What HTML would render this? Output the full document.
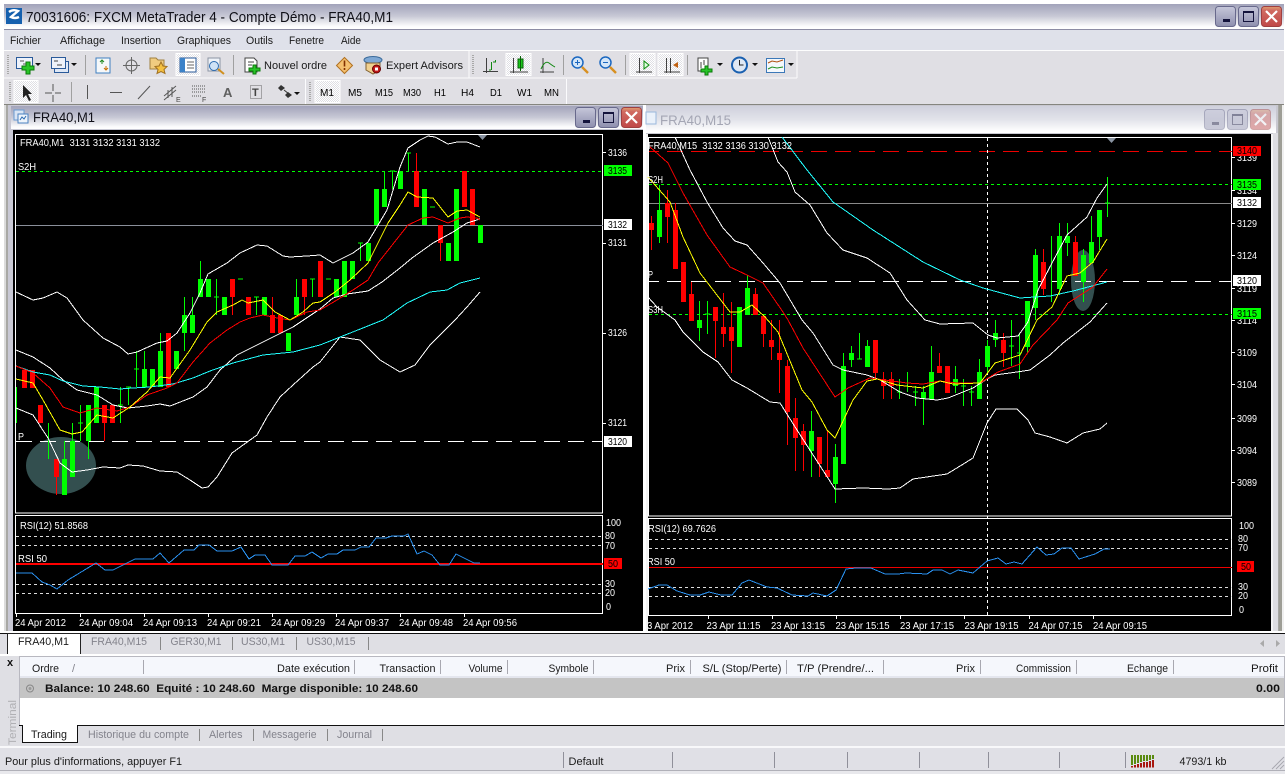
<!DOCTYPE html>
<html><head><meta charset="utf-8"><title>MetaTrader</title>
<style>
html,body{margin:0;padding:0;background:#fff}
svg{display:block}
text{font-family:"Liberation Sans",sans-serif;font-size:11px;fill:#1a1a1a;white-space:pre}
.c text,text.c{fill:#fff;font-size:10px}
.k{font-size:10px!important;fill:#000!important}
.g{fill:#83838c}
.b{font-weight:bold;fill:#111}
.l{fill:none;shape-rendering:crispEdges}
.e{shape-rendering:crispEdges}
</style></head><body>
<svg width="1288" height="774" viewBox="0 0 1288 774" xmlns="http://www.w3.org/2000/svg">
<defs>
<linearGradient id="tb" x1="0" y1="0" x2="0" y2="1"><stop offset="0" stop-color="#a2a3ba"/><stop offset=".5" stop-color="#c8c9d6"/><stop offset=".9" stop-color="#fbfbfc"/><stop offset="1" stop-color="#fff"/></linearGradient>
<linearGradient id="tbi" x1="0" y1="0" x2="0" y2="1"><stop offset="0" stop-color="#cfd0dc"/><stop offset=".5" stop-color="#e2e3ea"/><stop offset=".9" stop-color="#fcfcfd"/><stop offset="1" stop-color="#fff"/></linearGradient>
<linearGradient id="bb" x1="0" y1="0" x2="0" y2="1"><stop offset="0" stop-color="#c6c7da"/><stop offset="1" stop-color="#8e8fae"/></linearGradient>
<linearGradient id="br" x1="0" y1="0" x2="0" y2="1"><stop offset="0" stop-color="#e0a070"/><stop offset=".2" stop-color="#d06a62"/><stop offset="1" stop-color="#c04848"/></linearGradient>
<pattern id="dith" width="2" height="2" patternUnits="userSpaceOnUse"><rect width="2" height="2" fill="#fff"/><rect width="1" height="1" fill="#dfdfe4"/><rect x="1" y="1" width="1" height="1" fill="#dfdfe4"/></pattern>
<g id="btns">
<rect x=".5" y=".5" width="20" height="20" rx="3" fill="url(#bb)" stroke="#68698c"/>
<rect x="8" y="13" width="7" height="3" fill="#14143c"/>
<rect x="23.5" y=".5" width="20" height="20" rx="3" fill="url(#bb)" stroke="#68698c"/>
<rect x="28.5" y="5.5" width="10" height="10" fill="none" stroke="#14143c"/><rect x="28" y="5" width="11" height="2" fill="#14143c"/>
<rect x="46.5" y=".5" width="20" height="20" rx="3" fill="url(#br)" stroke="#a04040"/>
<path d="M51 5l11 11M62 5l-11 11" stroke="#fff" stroke-width="2.2" fill="none"/>
</g>
<g id="arr"><path d="M0 0h6l-3 3z" fill="#111"/></g>
</defs>

<rect width="1288" height="774" fill="#fff"/>

<!-- main title -->
<rect x="4" y="4" width="1280" height="24.5" fill="url(#tb)"/>
<rect x="4" y="29" width="1280" height="1" fill="#8c8ca4"/>
<rect x="6" y="8" width="16" height="16" fill="#1560ae"/>
<path d="M9 12q4-3 9-1l-7 6q4 2 8 0" fill="none" stroke="#fff" stroke-width="2.4"/>
<text x="26" y="22" textLength="367" lengthAdjust="spacingAndGlyphs" style="font-size:15px;fill:#101018">70031606: FXCM MetaTrader 4 - Compte Démo - FRA40,M1</text>
<use href="#btns" x="1215" y="6"/>

<!-- menu -->
<rect x="4" y="30" width="1280" height="20" fill="#dfe1ea"/>
<rect x="4" y="50" width="1280" height="1" fill="#fdfdfd"/>
<text x="10" y="44" textLength="31" lengthAdjust="spacingAndGlyphs">Fichier</text>
<text x="60" y="44" textLength="45" lengthAdjust="spacingAndGlyphs">Affichage</text>
<text x="121" y="44" textLength="40" lengthAdjust="spacingAndGlyphs">Insertion</text>
<text x="177" y="44" textLength="54" lengthAdjust="spacingAndGlyphs">Graphiques</text>
<text x="246" y="44" textLength="27" lengthAdjust="spacingAndGlyphs">Outils</text>
<text x="289" y="44" textLength="35" lengthAdjust="spacingAndGlyphs">Fenetre</text>
<text x="341" y="44" textLength="20" lengthAdjust="spacingAndGlyphs">Aide</text>

<!-- toolbars -->
<rect x="4" y="51" width="1280" height="53" fill="#e0dfe4"/>
<path d="M4 78h793M797 51v27M469 51v27" stroke="#fbfbfd" fill="none" class="e"/>
<path d="M305.500 79v25M566.500 79v25" stroke="#fbfbfd" fill="none" class="e"/>
<path d="M4 104.500h1280" stroke="#85857f" fill="none" class="e"/>
<!-- grips -->
<path d="M8 55v20M473 55v20M10 82v20M310 82v20" stroke="#a8a8a8" stroke-width="2" stroke-dasharray="1 1" fill="none" class="e"/>
<!-- separators -->
<path d="M85.500 55v20M233.500 55v20M563.500 55v20M625.500 55v20M687.500 55v20M71.500 82v20" stroke="#a0a0a0" fill="none" class="e"/>
<!-- pressed -->
<g fill="url(#dith)" stroke="#fff" class="e">
<rect x="176" y="53.500" width="24" height="22"/><rect x="506" y="53.500" width="25" height="22"/>
<rect x="630" y="53.500" width="25" height="22"/><rect x="658" y="53.500" width="25" height="22"/>
<rect x="14" y="80.500" width="24" height="22"/><rect x="315" y="80.500" width="25" height="22"/>
</g>
<!-- new chart -->
<g>
<rect x="16.500" y="57.500" width="16" height="11" fill="#eef2fa" stroke="#2a5a9a"/>
<path d="M20 61h4M23 64h5" stroke="#555" fill="none"/>
<path d="M26 62h4v4h4v4h-4v4h-4v-4h-4v-4h4z" fill="#28c428" stroke="#0a7a0a"/>
<use href="#arr" x="35" y="63"/>
</g>
<g>
<rect x="54.500" y="61.500" width="14" height="11" fill="#dfe8f6" stroke="#2a5a9a"/>
<rect x="51.500" y="57.500" width="14" height="11" fill="#eef2fa" stroke="#2a5a9a"/>
<path d="M54 61h4M57 65h5" stroke="#444" fill="none"/>
<use href="#arr" x="71" y="63"/>
</g>
<!-- market watch -->
<rect x="96" y="58" width="14" height="15" fill="#f6f8fa" stroke="#3f7fc0"/>
<path d="M100 62l2-2 2 2M102 60v4" stroke="#208a20" fill="none"/><path d="M104 68l2 2 2-2M106 70v-4" stroke="#c87000" fill="none"/>
<!-- crosshair -->
<circle cx="131.500" cy="65.500" r="5.500" fill="none" stroke="#666"/><path d="M131.500 57v17M123 65.500h17" stroke="#666" fill="none"/>
<!-- folder star -->
<path d="M150 58h6l2 2h6v9h-14z" fill="#f0cc80" stroke="#a08040"/>
<path d="M161 62l2 4 4 .500-3 3 1 4-4-2-4 2 1-4-3-3 4-.500z" fill="#f4c040" stroke="#a07020"/>
<!-- navigator -->
<rect x="180" y="58" width="16" height="14" fill="#fff" stroke="#2a5a9a"/><rect x="180" y="58" width="5" height="14" fill="#3c82c8"/>
<path d="M187 62h7M187 65h7M187 68h7" stroke="#666" fill="none"/>
<!-- tester -->
<rect x="208" y="58" width="12" height="13" fill="#eef2f8" stroke="#8c94a4"/>
<circle cx="214" cy="66" r="4.500" fill="#cfe2f6" stroke="#2a6ab0"/><path d="M218 69l6 5" stroke="#d09020" stroke-width="2" fill="none"/>
<!-- new order -->
<path d="M245 58h9l3 3v11h-12z" fill="#fff" stroke="#444"/><path d="M248 62h6M248 65h4" stroke="#444" fill="none"/>
<path d="M253 65h3v3h4v3h-4v3h-3v-3h-4v-3h4z" fill="#28c428" stroke="#0a7a0a"/>
<text x="264" y="69" textLength="63" lengthAdjust="spacingAndGlyphs">Nouvel ordre</text>
<!-- alert -->
<path d="M344.500 57.500l8 8-8 8-8-8z" fill="#f4c070" stroke="#b07020"/><path d="M344.500 60.500v6M344.500 68v2" stroke="#803000" stroke-width="1.600" fill="none"/>
<!-- expert -->
<ellipse cx="373" cy="60" rx="9" ry="3.500" fill="#7fa8d4" stroke="#3a6a9a"/><path d="M366 63h14v7l-7 4-7-4z" fill="#f0d090" stroke="#806030"/>
<circle cx="376.500" cy="69" r="4" fill="#c01818" stroke="#600"/><rect x="375" y="67.500" width="3" height="3" fill="#fff"/>
<text x="386" y="69" textLength="77" lengthAdjust="spacingAndGlyphs">Expert Advisors</text>
<!-- chart type icons -->
<path d="M486.500 58v15M483 71.500h15" stroke="#404040" fill="none"/><path d="M491.500 62v8M493 62h3M489 70h2M495.500 60v2" stroke="#128812" fill="none"/>
<path d="M513.500 58v15M510 72h18" stroke="#404040" fill="none"/><rect x="518" y="59" width="5" height="9" fill="#1cc81c" stroke="#086008"/><path d="M520.500 56v15" stroke="#086008" fill="none"/>
<path d="M543 58v15M540 72h14" stroke="#404040" fill="none"/><path d="M541 69q4-9 8-6t6 4" stroke="#128812" fill="none"/>
<!-- zoom -->
<circle cx="577.500" cy="62.500" r="5.500" fill="#d4e6f8" stroke="#1c68c0" stroke-width="1.500"/><path d="M575 62.500h5M577.500 60v5" stroke="#1c68c0" fill="none"/><path d="M582 67l6 6" stroke="#d89020" stroke-width="2.400" fill="none"/>
<circle cx="605.500" cy="62.500" r="5.500" fill="#d4e6f8" stroke="#1c68c0" stroke-width="1.500"/><path d="M603 62.500h5" stroke="#1c68c0" fill="none"/><path d="M610 67l6 6" stroke="#d89020" stroke-width="2.400" fill="none"/>
<!-- shift -->
<path d="M639.500 58v15M636 72h16" stroke="#404040" fill="none"/><path d="M644 61l5 4-5 4z" fill="#dfffdf" stroke="#0a8a0a"/>
<path d="M666.500 58v15M670.500 58v15M664 72h16" stroke="#404040" fill="none"/><path d="M678 62l-5 3 5 3z" fill="#c06010"/>
<!-- new doc -->
<path d="M698 58h10v13h-10z" fill="#fff" stroke="#444"/><path d="M701 62v6M704 60v5" stroke="#444" fill="none"/>
<path d="M705 66h3v3h4v3h-4v3h-3v-3h-4v-3h4z" fill="#28c428" stroke="#0a7a0a"/><use href="#arr" x="717" y="63"/>
<!-- clock -->
<circle cx="739.500" cy="65" r="7.500" fill="#dfe8f4" stroke="#1a60b0" stroke-width="2"/><path d="M739.500 60v5h4" stroke="#222" fill="none"/><use href="#arr" x="752" y="63"/>
<!-- indicators -->
<rect x="766.500" y="58.500" width="18" height="14" fill="#f4f8fc" stroke="#3c78b8"/><path d="M768 63l4-2 5 1 6-2" stroke="#b05010" fill="none"/><path d="M768 69l4-2 5 1 6-1" stroke="#209020" fill="none"/><use href="#arr" x="788" y="63"/>

<!-- toolbar 2 -->
<path d="M23 85v13l3-3 3 6 2-1-3-6h4z" fill="#222"/>
<path d="M53 84v7M53 95v7M45 93h7M55 93h6" stroke="#555" fill="none"/>
<path d="M87.500 85v14M110 92.500h12M138 99l12-13" stroke="#555" fill="none"/>
<path d="M164 96l12-10M164 100l12-10M168 90v8M172 87v10" stroke="#555" fill="none"/><text x="176" y="102" style="font-size:7px;fill:#444">E</text>
<path d="M192 86h14M192 89h14M192 92h14M192 96h9" stroke="#555" stroke-dasharray="1 1" fill="none"/><text x="202" y="102" style="font-size:7px;fill:#444">F</text>
<text x="223" y="97" style="font-size:13px;font-weight:bold;fill:#606060">A</text>
<rect x="250.500" y="85.500" width="11" height="13" fill="none" stroke="#666" stroke-dasharray="1 1"/><text x="252" y="96" style="font-size:11px;font-weight:bold;fill:#444">T</text>
<path d="M281 85l4 3-4 3-3-3zM288 92l4 3-4 3-3-3z" fill="#333"/><path d="M284 90l5 4" stroke="#333" fill="none"/><use href="#arr" x="294" y="92"/>
<text class="k" x="320" y="96" textLength="14" lengthAdjust="spacingAndGlyphs">M1</text>
<text class="k" x="348" y="96" textLength="14" lengthAdjust="spacingAndGlyphs">M5</text>
<text class="k" x="375" y="96" textLength="18" lengthAdjust="spacingAndGlyphs">M15</text>
<text class="k" x="403" y="96" textLength="18" lengthAdjust="spacingAndGlyphs">M30</text>
<text class="k" x="434" y="96" textLength="12" lengthAdjust="spacingAndGlyphs">H1</text>
<text class="k" x="461" y="96" textLength="13" lengthAdjust="spacingAndGlyphs">H4</text>
<text class="k" x="490" y="96" textLength="12" lengthAdjust="spacingAndGlyphs">D1</text>
<text class="k" x="517" y="96" textLength="15" lengthAdjust="spacingAndGlyphs">W1</text>
<text class="k" x="544" y="96" textLength="15" lengthAdjust="spacingAndGlyphs">MN</text>

<!-- MDI background -->
<rect x="4" y="105" width="1280" height="527" fill="#a8a8a4"/>
<rect x="4" y="105" width="2" height="527" fill="#dcdcdc"/>
<rect x="1279" y="105" width="3" height="527" fill="#9e9e96"/>
<rect x="1282" y="105" width="2" height="527" fill="#f0f0f0"/>

<!-- LEFT WINDOW -->
<rect x="8" y="105" width="637" height="527" fill="#c8c8d4"/>
<rect x="11" y="106" width="634" height="23" fill="url(#tb)"/>
<rect x="643" y="105" width="3" height="527" fill="#fff"/>
<rect x="14" y="110" width="10" height="10" fill="#d8e4f4" stroke="#6a9ad0"/><rect x="18" y="114" width="10" height="9" fill="#eef4fb" stroke="#4a82c0"/><path d="M20 120l2-3 2 2 2-3" stroke="#2a6ab0" fill="none"/>
<text x="33" y="122" textLength="62" lengthAdjust="spacingAndGlyphs" style="font-size:14px;fill:#101018">FRA40,M1</text>
<use href="#btns" x="575" y="107"/>
<rect x="13" y="130" width="630" height="501" fill="#000"/>

<!-- RIGHT WINDOW -->
<rect x="646" y="105" width="632" height="527" fill="#c8c8d0"/>
<rect x="646" y="106" width="630" height="27" fill="url(#tbi)"/>
<rect x="1271" y="134" width="2" height="498" fill="#f4f4f4"/>
<rect x="1273" y="133" width="5" height="499" fill="#dedee2"/>
<rect x="646" y="134" width="2" height="498" fill="#f4f4f4"/>
<rect x="646" y="112" width="10" height="12" fill="#eaf1fa" stroke="#9ab8dc"/>
<text x="660" y="125" textLength="71" lengthAdjust="spacingAndGlyphs" style="font-size:14px;fill:#a4a6b4">FRA40,M15</text>
<use href="#btns" x="1204" y="109" opacity=".45"/>
<rect x="648" y="134" width="623" height="497" fill="#000"/>

<!-- LEFT CHART -->
<ellipse cx="61" cy="465.500" rx="35" ry="28.500" fill="#334f4f"/>
<rect x="15.500" y="134.500" width="587" height="378.500" fill="none" stroke="#fff" class="e"/>
<rect x="15.500" y="515.500" width="587" height="98" fill="none" stroke="#fff" class="e"/>
<path d="M16 171.500h587" stroke="#0f0" stroke-dasharray="3 3" class="l"/>
<path d="M16 225.500h587" stroke="#8a8f9a" class="l"/>
<path d="M16 441.500h587" stroke="#fff" stroke-dasharray="16 8" class="l"/>
<path d="M478 135h9l-4.500 5z" fill="#8a94a2"/>
<path class="l" stroke="#0f0" d="M16.500 387V423M48.500 423V459M64.500 441V459M72.500 423V441M80.500 405V441M78 423h5M88.500 441V459M120.500 387V423M118 405h5M128.500 387V405M126 387h5M136.500 351V387M134 369h5M144.500 351V369M160.500 333V351M184.500 297V351M192.500 297V315M200.500 261V279M216.500 279V315M214 297h5M238 279h5M256.500 297V315M254 297h5M296.500 279V297M312.500 279V297M310 279h5M326 279h5M360.500 243V261M358 243h5M384.500 171V189M392.500 171V189M390 171h5M408.500 153V171M406 153h5M430 207h5"/>
<path class="l" stroke="#0f0" stroke-width="5" d="M64.500 459V495M72.500 441V477M88.500 405V441M96.500 387V423M144.500 369V387M152.500 369V387M160.500 351V387M176.500 351V369M184.500 315V333M192.500 315V333M200.500 279V297M208.500 279V297M224.500 297V315M264.500 297V315M288.500 333V351M296.500 297V315M336.500 279V297M344.500 261V297M352.500 261V279M368.500 243V261M376.500 189V225M384.500 189V207M400.500 171V189M424.500 189V225M448.500 243V261M456.500 189V261M480.500 225V243"/>
<path class="l" stroke="#f00" d="M56.500 477V495M104.500 423V441M232.500 297V315M272.500 297V315M304.500 297V315M416.500 153V171M440.500 243V261"/>
<path class="l" stroke="#f00" stroke-width="5" d="M24.500 370V388M32.500 370V388M40.500 405V423M56.500 459V477M104.500 405V423M112.500 405V423M168.500 333V387M232.500 279V297M248.500 297V315M272.500 315V333M280.500 315V333M304.500 279V297M320.500 261V297M416.500 171V207M440.500 225V243M464.500 171V207M472.500 189V225"/>
<polyline class="l" stroke="#fff" points="16,292 33,300 43,298 57,292 67,298 83,320 103,338 120,347 128,354 137,352 157,343 167,341 177,333 190,313 200,293 208,274 227,263 240,253 257,245 267,246 283,256 290,257 307,256 320,255 333,263 353,253 368,242 387,210 400,167 408,148 420,140 428,136 435,137 448,144 457,142 467,142 480,147"/>
<polyline class="l" stroke="#fff" points="16,350 33,357 50,368 63,380 77,390 97,395 113,405 128,408 147,406 160,404 170,406 193,397 207,387 220,370 237,355 253,347 273,337 293,327 320,309 333,298 347,294 368,291 382,282 400,268 412,258 433,243 453,232 467,223 480,219"/>
<polyline class="l" stroke="#fff" points="16,408 33,415 48,438 60,463 72,472 87,470 103,467 120,468 128,465 143,466 160,471 177,472 190,480 202,488 208,487 217,477 232,453 257,435 267,417 280,397 293,385 313,367 320,362 340,337 360,340 380,360 400,372 415,365 430,345 455,320 467,307 480,292"/>
<polyline class="l" stroke="#2ff" points="16,366 33,372 50,375 63,381 83,386 100,387 120,389 133,388 150,387 173,384 193,378 210,371 233,363 263,355 293,352 320,345 383,320 407,303 430,292 447,290 460,283 480,278"/>
<polyline class="l" stroke="#f00" points="16,366 33,373 50,388 63,407 80,413 97,408 117,411 130,407 147,395 167,388 177,383 193,362 210,343 227,330 240,322 250,318 263,315 277,318 290,320 307,312 320,310 337,300 353,290 368,280 378,263 408,225 423,218 433,217 448,223 460,218 467,217 477,218 480,220"/>
<polyline class="l" stroke="#ff0" points="16,379 33,383 43,400 60,430 72,434 82,432 97,415 113,418 130,407 147,392 160,377 170,378 190,350 207,322 217,312 233,305 242,300 248,303 263,300 275,312 290,320 303,312 313,303 320,302 335,292 350,280 368,263 388,223 400,205 408,192 417,197 433,198 448,217 457,211 467,210 480,217"/>
<!-- left labels -->
<g class="c">
<text x="20" y="146" textLength="140" lengthAdjust="spacingAndGlyphs">FRA40,M1  3131 3132 3131 3132</text>
<text x="18" y="170" textLength="18" lengthAdjust="spacingAndGlyphs">S2H</text>
<text x="18" y="440" textLength="6" lengthAdjust="spacingAndGlyphs">P</text>
<text x="20" y="529" textLength="68" lengthAdjust="spacingAndGlyphs">RSI(12) 51.8568</text>
<text x="18" y="562" textLength="29" lengthAdjust="spacingAndGlyphs">RSI 50</text>
<text x="608" y="156" textLength="19" lengthAdjust="spacingAndGlyphs">3136</text>
<text x="608" y="246" textLength="19" lengthAdjust="spacingAndGlyphs">3131</text>
<text x="608" y="336" textLength="19" lengthAdjust="spacingAndGlyphs">3126</text>
<text x="608" y="426" textLength="19" lengthAdjust="spacingAndGlyphs">3121</text>
<text x="606" y="526" textLength="15" lengthAdjust="spacingAndGlyphs">100</text>
<text x="605" y="539" textLength="10" lengthAdjust="spacingAndGlyphs">80</text>
<text x="605" y="549" textLength="10" lengthAdjust="spacingAndGlyphs">70</text>
<text x="605" y="587" textLength="10" lengthAdjust="spacingAndGlyphs">30</text>
<text x="605" y="596" textLength="10" lengthAdjust="spacingAndGlyphs">20</text>
<text x="606" y="610" textLength="5" lengthAdjust="spacingAndGlyphs">0</text>
<text x="15" y="626" textLength="51" lengthAdjust="spacingAndGlyphs">24 Apr 2012</text>
<text x="79" y="626" textLength="54" lengthAdjust="spacingAndGlyphs">24 Apr 09:04</text>
<text x="143" y="626" textLength="54" lengthAdjust="spacingAndGlyphs">24 Apr 09:13</text>
<text x="207" y="626" textLength="54" lengthAdjust="spacingAndGlyphs">24 Apr 09:21</text>
<text x="271" y="626" textLength="54" lengthAdjust="spacingAndGlyphs">24 Apr 09:29</text>
<text x="335" y="626" textLength="54" lengthAdjust="spacingAndGlyphs">24 Apr 09:37</text>
<text x="399" y="626" textLength="54" lengthAdjust="spacingAndGlyphs">24 Apr 09:48</text>
<text x="463" y="626" textLength="54" lengthAdjust="spacingAndGlyphs">24 Apr 09:56</text>
</g>
<path class="l" stroke="#fff" d="M603 152.500h3M603 243.500h3M603 333.500h3M603 423.500h3M16.500 614v3M80.500 614v3M144.500 614v3M208.500 614v3M272.500 614v3M336.500 614v3M400.500 614v3M464.500 614v3"/>
<rect x="604" y="165" width="28" height="11" fill="#0f0"/><text class="k" x="608" y="174" textLength="19" lengthAdjust="spacingAndGlyphs">3135</text>
<rect x="604" y="219" width="28" height="11" fill="#fff"/><text class="k" x="608" y="228" textLength="19" lengthAdjust="spacingAndGlyphs">3132</text>
<rect x="604" y="436" width="28" height="11" fill="#fff"/><text class="k" x="608" y="445" textLength="19" lengthAdjust="spacingAndGlyphs">3120</text>
<!-- left RSI -->
<path d="M16 536.500h587M16 545.500h587M16 584.500h587M16 593.500h587" stroke="#ddd" stroke-dasharray="3 3" class="l"/>
<path d="M16 564h587" stroke="#f00" stroke-width="2" class="l"/>
<polyline class="l" stroke="#2a90ee" points="16,573 32,573 42,582 50,585 57,589 68,580 96,563 105,570 113,570 135,559 153,559 160,553 169,563 184,550 194,550 199,545 209,545 217,551 232,551 241,547 249,559 255,555 265,555 272,565 288,565 295,556 305,556 312,552 321,558 328,554 337,554 343,550 355,550 361,547 369,547 376,538 386,538 392,536 404,536 408,534 417,554 424,551 432,555 440,565 449,565 456,554 474,563 480,563"/>
<rect x="604" y="558" width="18" height="11" fill="#f00"/><text class="k" x="608" y="567" textLength="10" lengthAdjust="spacingAndGlyphs">50</text>

<!-- RIGHT CHART -->
<ellipse cx="1083" cy="280.500" rx="12" ry="30.500" fill="#334f4f"/>
<rect x="648.500" y="137.500" width="583" height="378.500" fill="none" stroke="#fff" class="e"/>
<rect x="648.500" y="518.500" width="583" height="97" fill="none" stroke="#fff" class="e"/>
<path d="M649 151.500h583" stroke="#e00" stroke-dasharray="16 8" stroke-dashoffset="6" class="l"/>
<path d="M649 184.500h583" stroke="#0f0" stroke-dasharray="3 3" class="l"/>
<path d="M649 203.500h583" stroke="#8a8a8a" class="l"/>
<path d="M649 281.500h583" stroke="#fff" stroke-dasharray="16 8" stroke-dashoffset="6" class="l"/>
<path d="M649 314.500h583" stroke="#0f0" stroke-dasharray="3 3" class="l"/>
<path d="M987.500 138V615" stroke="#fff" stroke-dasharray="3 3" class="l"/>
<path d="M1107 138h9l-4.500 5z" fill="#8a94a2"/>
<path class="l" stroke="#0f0" d="M659.500 185V243M699.500 301V341M707.500 301V334M705 314h5M747.500 275V288M811.500 411V477M835.500 444V503M843.500 353V366M851.500 346V367M859.500 333V359M857 359h5M867.500 340V346M899.500 379V399M897 392h5M907.500 372V392M915.500 386V406M913 392h5M923.500 386V425M931.500 346V372M955.500 366V393M963.500 379V406M961 386h5M971.500 386V406M969 392h5M979.500 359V372M987.500 340V373M995.500 320V347M1011.500 320V366M1009 346h5M1019.500 333V379M1017 353h5M1027.500 347V353M1035.500 249V320M1051.500 236V302M1059.500 223V295M1067.500 223V256M1083.500 249V302M1091.500 216V242M1099.500 237V250M1107.500 177V217M1105 203h5"/>
<path class="l" stroke="#0f0" stroke-width="5" d="M659.500 210V237M699.500 320V328M739.500 307V347M747.500 288V315M811.500 431V451M835.500 457V484M843.500 366V464M851.500 353V360M867.500 346V367M923.500 392V399M931.500 372V399M955.500 379V386M979.500 372V399M987.500 346V367M995.500 333V340M1027.500 301V347M1035.500 255V308M1059.500 236V289M1067.500 236V243M1083.500 255V282M1091.500 242V263M1099.500 210V237"/>
<path class="l" stroke="#f00" d="M651.500 216V250M667.500 190V243M675.500 203V210M691.500 282V294M715.500 321V358M723.500 293V347M731.500 302V373M755.500 288V294M763.500 334V347M771.500 320V360M779.500 320V393M787.500 360V445M795.500 398V471M803.500 424V471M819.500 464V477M827.500 431V470M875.500 373V378M883.500 372V399M891.500 372V399M939.500 353V366M1003.500 333V367M1043.500 249V295M1075.500 236V242"/>
<path class="l" stroke="#f00" stroke-width="5" d="M651.500 223V230M667.500 203V217M675.500 210V269M683.500 262V302M691.500 294V321M715.500 307V321M723.500 327V334M731.500 327V341M755.500 294V315M763.500 316V334M771.500 340V347M779.500 353V360M787.500 366V412M795.500 418V438M803.500 431V445M819.500 437V464M827.500 470V477M875.500 340V373M883.500 379V386M891.500 379V386M939.500 366V373M947.500 366V393M1003.500 340V353M1043.500 262V289M1075.500 242V276"/>
<polyline class="l" stroke="#fff" points="675,137 690,170 707,202 723,228 735,241 747,245 763,263 780,283 802,320 813,333 833,365 843,370 867,375 880,380 900,392 917,398 937,400 948,398 973,388 987,379 995,375 1017,372 1030,370 1050,355 1063,343 1090,322 1107,303"/>
<polyline class="l" stroke="#fff" points="768,137 778,162 787,172 795,192 810,205 827,233 843,250 867,258 890,273 907,300 925,320 940,324 973,323 988,335 997,338 1018,336 1028,322 1038,290 1052,263 1067,235 1087,217 1097,198 1107,184"/>
<polyline class="l" stroke="#fff" points="648,297 657,307 675,320 683,332 703,352 718,362 732,380 747,388 770,402 780,403 797,430 835,489 863,488 888,489 900,488 913,479 947,474 965,463 973,458 987,423 996,409 1017,409 1028,420 1035,433 1050,437 1067,443 1083,433 1100,429 1107,423"/>
<polyline class="l" stroke="#2ff" points="782,137 807,170 833,202 873,230 923,262 960,280 983,288 1020,298 1050,296 1073,291 1107,282"/>
<polyline class="l" stroke="#f00" points="650,147 668,163 683,193 707,235 730,267 747,275 763,283 783,312 788,320 803,348 835,397 848,388 870,378 907,383 923,384 940,381 957,383 980,383 998,372 1020,364 1033,345 1057,320 1068,303 1093,287 1107,269"/>
<polyline class="l" stroke="#ff0" points="648,177 670,202 683,237 700,273 730,312 740,312 752,305 765,317 778,332 802,390 812,402 827,430 835,438 853,400 867,381 877,379 897,385 923,388 940,381 953,384 980,383 995,363 1020,355 1037,320 1052,307 1067,276 1080,273 1093,262 1107,239"/>
<g class="c">
<text x="1237" y="161" textLength="20" lengthAdjust="spacingAndGlyphs">3139</text>
<text x="1237" y="194" textLength="20" lengthAdjust="spacingAndGlyphs">3134</text>
<text x="1237" y="227" textLength="20" lengthAdjust="spacingAndGlyphs">3129</text>
<text x="1237" y="259" textLength="20" lengthAdjust="spacingAndGlyphs">3124</text>
<text x="1237" y="292" textLength="20" lengthAdjust="spacingAndGlyphs">3119</text>
<text x="1237" y="324" textLength="20" lengthAdjust="spacingAndGlyphs">3114</text>
<text x="1237" y="356" textLength="20" lengthAdjust="spacingAndGlyphs">3109</text>
<text x="1237" y="388" textLength="20" lengthAdjust="spacingAndGlyphs">3104</text>
<text x="1237" y="422" textLength="20" lengthAdjust="spacingAndGlyphs">3099</text>
<text x="1237" y="454" textLength="20" lengthAdjust="spacingAndGlyphs">3094</text>
<text x="1237" y="486" textLength="20" lengthAdjust="spacingAndGlyphs">3089</text>
<text x="648" y="149" textLength="144" lengthAdjust="spacingAndGlyphs">FRA40,M15  3132 3136 3130 3132</text>
<text x="648" y="183" textLength="15" lengthAdjust="spacingAndGlyphs">S2H</text>
<text x="648" y="278" textLength="5" lengthAdjust="spacingAndGlyphs">P</text>
<text x="648" y="313" textLength="15" lengthAdjust="spacingAndGlyphs">S3H</text>
<text x="648" y="532" textLength="68" lengthAdjust="spacingAndGlyphs">RSI(12) 69.7626</text>
<text x="647" y="565" textLength="28" lengthAdjust="spacingAndGlyphs">RSI 50</text>
<text x="1239" y="529" textLength="15" lengthAdjust="spacingAndGlyphs">100</text>
<text x="1238" y="542" textLength="10" lengthAdjust="spacingAndGlyphs">80</text>
<text x="1238" y="551" textLength="10" lengthAdjust="spacingAndGlyphs">70</text>
<text x="1238" y="590" textLength="10" lengthAdjust="spacingAndGlyphs">30</text>
<text x="1238" y="599" textLength="10" lengthAdjust="spacingAndGlyphs">20</text>
<text x="1239" y="613" textLength="5" lengthAdjust="spacingAndGlyphs">0</text>
<text x="647" y="629" textLength="46" lengthAdjust="spacingAndGlyphs">3 Apr 2012</text>
<text x="706.500" y="629" textLength="54" lengthAdjust="spacingAndGlyphs">23 Apr 11:15</text>
<text x="771" y="629" textLength="54" lengthAdjust="spacingAndGlyphs">23 Apr 13:15</text>
<text x="835.500" y="629" textLength="54" lengthAdjust="spacingAndGlyphs">23 Apr 15:15</text>
<text x="900" y="629" textLength="54" lengthAdjust="spacingAndGlyphs">23 Apr 17:15</text>
<text x="964.500" y="629" textLength="54" lengthAdjust="spacingAndGlyphs">23 Apr 19:15</text>
<text x="1028.500" y="629" textLength="54" lengthAdjust="spacingAndGlyphs">24 Apr 07:15</text>
<text x="1093" y="629" textLength="54" lengthAdjust="spacingAndGlyphs">24 Apr 09:15</text>
</g>
<path class="l" stroke="#fff" d="M1232 157.500h3M1232 190.500h3M1232 223.500h3M1232 255.500h3M1232 288.500h3M1232 320.500h3M1232 352.500h3M1232 384.500h3M1232 418.500h3M1232 450.500h3M1232 482.500h3M708.500 616v3M772.500 616v3M836.500 616v3M900.500 616v3M964.500 616v3M1029.500 616v3M1093.500 616v3"/>
<rect x="1233" y="146" width="28" height="10" fill="#f00"/><text class="k" x="1237" y="154" textLength="20" lengthAdjust="spacingAndGlyphs">3140</text>
<rect x="1233" y="179" width="28" height="11" fill="#0f0"/><text class="k" x="1237" y="188" textLength="20" lengthAdjust="spacingAndGlyphs">3135</text>
<rect x="1233" y="197" width="28" height="11" fill="#fff"/><text class="k" x="1237" y="206" textLength="20" lengthAdjust="spacingAndGlyphs">3132</text>
<rect x="1233" y="275" width="28" height="11" fill="#fff"/><text class="k" x="1237" y="284" textLength="20" lengthAdjust="spacingAndGlyphs">3120</text>
<rect x="1233" y="308" width="28" height="11" fill="#0f0"/><text class="k" x="1237" y="317" textLength="20" lengthAdjust="spacingAndGlyphs">3115</text>
<path d="M649 539.500h583M649 548.500h583M649 587.500h583M649 596.500h583" stroke="#ddd" stroke-dasharray="3 3" class="l"/>
<path d="M649 567.500h583" stroke="#e00" class="l"/>
<polyline class="l" stroke="#2a90ee" points="648,589 659,585 667,585 677,591 690,595 700,595 709,592 721,595 732,595 742,583 749,580 767,587 777,588 792,595 808,596 813,593 827,596 836,590 846,569 856,568 871,568 885,574 898,574 906,573 927,574 933,570 942,570 950,574 958,570 973,573 987,561 998,558 1006,564 1014,562 1022,564 1037,547 1046,555 1054,554 1062,548 1071,548 1079,559 1095,554 1104,549 1110,549"/>
<rect x="1237" y="561" width="17" height="11" fill="#f00"/><text class="k" x="1241" y="570" textLength="10" lengthAdjust="spacingAndGlyphs">50</text>

<!-- chart tabs strip -->
<rect x="0" y="631" width="1285" height="2" fill="#fff"/>
<rect x="0" y="633" width="1285" height="21" fill="#dfdfe4"/>
<rect x="0" y="633" width="1285" height="1" fill="#111"/>
<rect x="7.500" y="633.500" width="73" height="20" fill="#fff" stroke="#222" class="e"/>
<rect x="8" y="653" width="72" height="2" fill="#fff"/>
<text x="18" y="645" textLength="51" lengthAdjust="spacingAndGlyphs">FRA40,M1</text>
<text x="91" y="645" textLength="56" lengthAdjust="spacingAndGlyphs" class="g">FRA40,M15</text>
<text x="170.500" y="645" textLength="51" lengthAdjust="spacingAndGlyphs" class="g">GER30,M1</text>
<text x="241" y="645" textLength="44" lengthAdjust="spacingAndGlyphs" class="g">US30,M1</text>
<text x="306.500" y="645" textLength="49" lengthAdjust="spacingAndGlyphs" class="g">US30,M15</text>
<path d="M160.500 637v13M232.500 637v13M296.500 637v13M368.500 637v13" stroke="#888" class="l"/>
<path d="M1264 640v7l-4-3.500zM1276 640v7l4-3.500z" fill="#aaa"/>

<!-- terminal -->
<rect x="0" y="654" width="1285" height="92" fill="#dfdfe4"/>
<rect x="0" y="654" width="1285" height="2" fill="#fff"/>
<rect x="19.500" y="656.500" width="1265" height="69" fill="#fff" stroke="#b8b8c0" class="e"/>
<rect x="20" y="657" width="1264" height="19" fill="#f5f7fc"/>
<rect x="20" y="676" width="1264" height="2" fill="#e4e6ee"/>
<rect x="20" y="678" width="1264" height="20" fill="#c4c4c4"/>
<text x="7" y="666" style="font-size:11px;font-weight:bold;fill:#111">x</text>
<text x="32" y="672" textLength="27" lengthAdjust="spacingAndGlyphs">Ordre</text>
<text x="72" y="672" class="g">/</text>
<text x="277" y="672" textLength="73" lengthAdjust="spacingAndGlyphs">Date exécution</text>
<text x="379.500" y="672" textLength="56" lengthAdjust="spacingAndGlyphs">Transaction</text>
<text x="468.500" y="672" textLength="34" lengthAdjust="spacingAndGlyphs">Volume</text>
<text x="548.500" y="672" textLength="40" lengthAdjust="spacingAndGlyphs">Symbole</text>
<text x="666" y="672" textLength="19" lengthAdjust="spacingAndGlyphs">Prix</text>
<text x="702.500" y="672" textLength="79" lengthAdjust="spacingAndGlyphs">S/L (Stop/Perte)</text>
<text x="797" y="672" textLength="77" lengthAdjust="spacingAndGlyphs">T/P (Prendre/...</text>
<text x="956" y="672" textLength="19" lengthAdjust="spacingAndGlyphs">Prix</text>
<text x="1016" y="672" textLength="55" lengthAdjust="spacingAndGlyphs">Commission</text>
<text x="1127" y="672" textLength="41" lengthAdjust="spacingAndGlyphs">Echange</text>
<text x="1251" y="672" textLength="27" lengthAdjust="spacingAndGlyphs">Profit</text>
<path d="M143.500 660v14M354.500 660v14M440.500 660v14M507.500 660v14M593.500 660v14M690.500 660v14M786.500 660v14M883.500 660v14M980.500 660v14M1076.500 660v14M1173.500 660v14" stroke="#a8a8b0" class="l"/>
<circle cx="30" cy="688.500" r="3.500" fill="#c4c4c4" stroke="#888"/><circle cx="30" cy="688.500" r="1.500" fill="#999"/>
<text x="45" y="692" textLength="373" lengthAdjust="spacingAndGlyphs" class="b">Balance: 10 248.60  Equité : 10 248.60  Marge disponible: 10 248.60</text>
<text x="1256" y="692" textLength="24" lengthAdjust="spacingAndGlyphs" class="b">0.00</text>
<text transform="translate(16,745) rotate(-90)" textLength="45" lengthAdjust="spacingAndGlyphs" style="font-size:11px;fill:#b0b0b4">Terminal</text>
<path d="M19 725.500h1265" stroke="#111" class="l"/>
<rect x="22.500" y="725.500" width="55" height="17" fill="#fff" stroke="#111" class="e"/>
<rect x="23" y="724" width="54" height="3" fill="#fff"/>
<text x="31" y="738" textLength="36" lengthAdjust="spacingAndGlyphs">Trading</text>
<text x="88" y="738" textLength="101" lengthAdjust="spacingAndGlyphs" class="g">Historique du compte</text>
<text x="209" y="738" textLength="33.500" lengthAdjust="spacingAndGlyphs" class="g">Alertes</text>
<text x="262.500" y="738" textLength="54" lengthAdjust="spacingAndGlyphs" class="g">Messagerie</text>
<text x="337" y="738" textLength="35" lengthAdjust="spacingAndGlyphs" class="g">Journal</text>
<path d="M199.500 729v12M253.500 729v12M327.500 729v12M382.500 729v12" stroke="#888" class="l"/>

<!-- status bar -->
<rect x="0" y="746" width="1285" height="2" fill="#f8f8fa"/>
<rect x="0" y="748" width="1285" height="22" fill="#e0e0e6"/>
<rect x="0" y="770" width="1285" height="1" fill="#b0b0b8"/>
<rect x="0" y="771" width="1285" height="3" fill="#e8e8ec"/>
<text x="5" y="765" textLength="177" lengthAdjust="spacingAndGlyphs">Pour plus d'informations, appuyer F1</text>
<text x="568.500" y="765" textLength="35" lengthAdjust="spacingAndGlyphs">Default</text>
<text x="1179.500" y="765" textLength="47" lengthAdjust="spacingAndGlyphs">4793/1 kb</text>
<path d="M563.500 752v16M672.500 752v16M774.500 752v16M847.500 752v16M919.500 752v16M988.500 752v16M1059.500 752v16M1125.500 752v16" stroke="#90909a" class="l"/>
<path d="M1132 755v10M1135 755v9M1138 755v8M1141 755v7M1144 755v6M1147 755v6M1150 755v5M1153 755v4" stroke="#5a8a10" stroke-width="2" class="l"/>
<path d="M1132 766v1.500M1135 765v2.500M1138 764v3.500M1141 763v4.500M1144 762v5.500M1147 762v5.500M1150 761v6.500M1153 760v7.500" stroke="#a81810" stroke-width="2" class="l"/>
<path d="M1272 769l12-12M1276 769l8-8M1280 769l4-4" stroke="#a8a8b0" fill="none"/>
</svg>
</body></html>
